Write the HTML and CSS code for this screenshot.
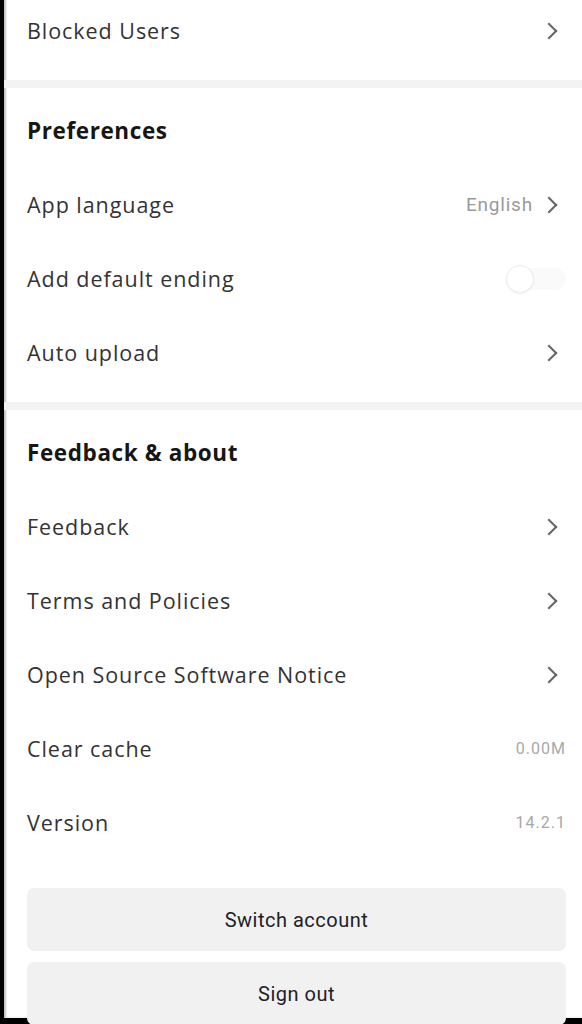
FILE: index.html
```html
<!DOCTYPE html>
<html>
<head>
    <meta charset="UTF-8" />
    <title>Settings</title>
    <link rel="stylesheet" href="styles.css">
</head>
<body>

    <div class="screen">
        <div class="section section-top">
            <div class="row">
                <span class="label">Blocked Users</span>
                <span class="right"><span class="chevron"></span></span>
            </div>
        </div>

        <div class="divider"></div>

        <div class="section">
            <div class="heading">Preferences</div>
            <div class="row">
                <span class="label">App language</span>
                <span class="right"><span class="value">English</span><span class="chevron"></span></span>
            </div>
            <div class="row">
                <span class="label">Add default ending</span>
                <span class="right"><span class="toggle"><span class="knob"></span></span></span>
            </div>
            <div class="row">
                <span class="label">Auto upload</span>
                <span class="right"><span class="chevron"></span></span>
            </div>
        </div>

        <div class="divider"></div>

        <div class="section">
            <div class="heading">Feedback &amp; about</div>
            <div class="row">
                <span class="label">Feedback</span>
                <span class="right"><span class="chevron"></span></span>
            </div>
            <div class="row">
                <span class="label">Terms and Policies</span>
                <span class="right"><span class="chevron"></span></span>
            </div>
            <div class="row">
                <span class="label">Open Source Software Notice</span>
                <span class="right"><span class="chevron"></span></span>
            </div>
            <div class="row">
                <span class="label">Clear cache</span>
                <span class="right"><span class="small">0.00M</span></span>
            </div>
            <div class="row">
                <span class="label">Version</span>
                <span class="right"><span class="small">14.2.1</span></span>
            </div>
        </div>

        <div class="buttons">
            <button class="btn">Switch account</button>
            <button class="btn">Sign out</button>
        </div>
    </div>

</body>
</html>
```

FILE: styles.css
```css
html, body {
    margin: 0;
    padding: 0;
    background-color: #000000;
}

body {
    font-family: "Open Sans", Roboto, sans-serif;
    height: 1024px;
    overflow: hidden;
}

.screen {
    margin-left: 4px;
    background-color: #ffffff;
    height: 1024px;
    box-shadow: inset 2px 0 2px rgba(0, 0, 0, 0.25);
}

.section {
    padding-bottom: 12px;
}

.section-top {
    margin-top: -6px;
}

.divider {
    height: 8px;
    background-color: #f3f3f4;
}

.heading {
    height: 80px;
    display: flex;
    align-items: center;
    padding: 4px 0 0 23px;
    box-sizing: border-box;
    font-size: 22.5px;
    font-weight: bold;
    color: #161616;
    letter-spacing: 0.6px;
}

.row {
    height: 74px;
    display: flex;
    align-items: center;
    justify-content: space-between;
    padding: 0 16px 0 23px;
}

.label {
    font-size: 21.5px;
    color: #333333;
    letter-spacing: 0.95px;
    margin-bottom: 2px;
}

.right {
    display: flex;
    align-items: center;
    gap: 10px;
}

.value {
    font-family: Roboto, sans-serif;
    font-size: 19px;
    color: #9a9a9a;
    letter-spacing: 0.8px;
    margin-bottom: 1px;
}

.small {
    font-family: Roboto, sans-serif;
    font-size: 16px;
    color: #a8a8a8;
    letter-spacing: 1px;
    margin-bottom: 2px;
}

.chevron {
    width: 10px;
    height: 10px;
    border-top: 2px solid #666666;
    border-right: 2px solid #666666;
    transform: rotate(45deg);
    margin-right: 11px;
}

.toggle {
    position: relative;
    width: 60px;
    height: 22px;
    border-radius: 11px;
    background-color: #fafafa;
}

.knob {
    position: absolute;
    left: 0;
    top: -3px;
    width: 26px;
    height: 26px;
    border-radius: 50%;
    background-color: #ffffff;
    border: 1px solid #ececec;
    box-shadow: 0 1px 2px rgba(0, 0, 0, 0.06);
}

.buttons {
    display: flex;
    flex-direction: column;
    gap: 11px;
    padding: 16px 16px 0 23px;
}

.btn {
    height: 63px;
    border: none;
    border-radius: 7px;
    background-color: #f1f1f2;
    font-family: Roboto, sans-serif;
    font-size: 20px;
    color: #222222;
    letter-spacing: 0.5px;
}
```
